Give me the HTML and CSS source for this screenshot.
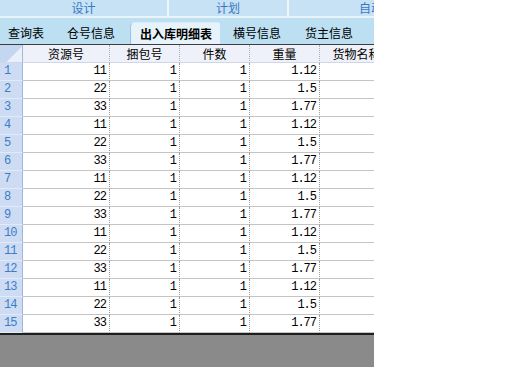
FILE: index.html
```html
<!DOCTYPE html>
<html>
<head>
<meta charset="utf-8">
<link rel="stylesheet" href="styles.css">
</head>
<body>
<div class="app">
  <div class="topbar">
    <div class="sec s1">设计</div>
    <div class="sec s2">计划</div>
    <div class="sec s3">自动化</div>
  </div>
  <div class="tabs">
    <div class="tab t1">查询表</div>
    <div class="tab t2">仓号信息</div>
    <div class="tab active">出入库明细表</div>
    <div class="tab t4">横号信息</div>
    <div class="tab t5">货主信息</div>
  </div>
  <div class="grid">
    <div class="hc corner"></div>
    <div class="hc">资源号</div>
    <div class="hc">捆包号</div>
    <div class="hc">件数</div>
    <div class="hc">重量</div>
    <div class="hc">货物名称</div>

    <div class="rn">1</div><div class="c">11</div><div class="c">1</div><div class="c">1</div><div class="c">1.12</div><div class="c"></div>
    <div class="rn">2</div><div class="c">22</div><div class="c">1</div><div class="c">1</div><div class="c">1.5</div><div class="c"></div>
    <div class="rn">3</div><div class="c">33</div><div class="c">1</div><div class="c">1</div><div class="c">1.77</div><div class="c"></div>
    <div class="rn">4</div><div class="c">11</div><div class="c">1</div><div class="c">1</div><div class="c">1.12</div><div class="c"></div>
    <div class="rn">5</div><div class="c">22</div><div class="c">1</div><div class="c">1</div><div class="c">1.5</div><div class="c"></div>
    <div class="rn">6</div><div class="c">33</div><div class="c">1</div><div class="c">1</div><div class="c">1.77</div><div class="c"></div>
    <div class="rn">7</div><div class="c">11</div><div class="c">1</div><div class="c">1</div><div class="c">1.12</div><div class="c"></div>
    <div class="rn">8</div><div class="c">22</div><div class="c">1</div><div class="c">1</div><div class="c">1.5</div><div class="c"></div>
    <div class="rn">9</div><div class="c">33</div><div class="c">1</div><div class="c">1</div><div class="c">1.77</div><div class="c"></div>
    <div class="rn">10</div><div class="c">11</div><div class="c">1</div><div class="c">1</div><div class="c">1.12</div><div class="c"></div>
    <div class="rn">11</div><div class="c">22</div><div class="c">1</div><div class="c">1</div><div class="c">1.5</div><div class="c"></div>
    <div class="rn">12</div><div class="c">33</div><div class="c">1</div><div class="c">1</div><div class="c">1.77</div><div class="c"></div>
    <div class="rn">13</div><div class="c">11</div><div class="c">1</div><div class="c">1</div><div class="c">1.12</div><div class="c"></div>
    <div class="rn">14</div><div class="c">22</div><div class="c">1</div><div class="c">1</div><div class="c">1.5</div><div class="c"></div>
    <div class="rn">15</div><div class="c">33</div><div class="c">1</div><div class="c">1</div><div class="c">1.77</div><div class="c"></div>
  </div>
  <div class="bottom"></div>
</div>
</body>
</html>
```
FILE: styles.css
```css
html, body {
  margin: 0;
  padding: 0;
  background: #ffffff;
}
.app {
  width: 374px;
  overflow: hidden;
  font-family: "Noto Sans CJK SC", "Liberation Sans", sans-serif;
  font-size: 12px;
}
.topbar {
  display: flex;
  height: 16px;
  background: #c6e2f4;
  border-bottom: 2px solid #e8f4fc;
}
.sec {
  flex: none;
  height: 16px;
  line-height: 16px;
  text-align: center;
  color: #3a76c4;
  white-space: nowrap;
  box-sizing: border-box;
}
.s1 { width: 169px; border-right: 2px solid #eef6fc; }
.s2 { width: 120px; border-right: 2px solid #eef6fc; }
.s3 { width: 170px; text-align: left; padding-left: 70px; }
.tabs {
  display: flex;
  align-items: flex-end;
  height: 26px;
  background: #bcdff2;
  border-bottom: 1px solid #3c3c3c;
}
.tab {
  flex: none;
  height: 22px;
  line-height: 21px;
  color: #000;
  white-space: nowrap;
  box-sizing: border-box;
}
.t1 { margin-left: 8px; }
.t2 { margin-left: 23px; }
.active {
  margin-left: 15px;
  padding: 0 9px;
  width: 90px;
  font-weight: bold;
  background: #e6f3fb;
  border-top-left-radius: 5px;
  border-top-right-radius: 2px;
  border-left: 1px solid #9cc4e0;
  border-top: 1px solid #d8ecf8;
}
.t4 { margin-left: 13px; }
.t5 { margin-left: 24px; }
.grid {
  display: grid;
  grid-template-columns: 23px 87px 70px 70px 70px 74px;
  grid-auto-rows: 18px;
  width: 394px;
}
.hc {
  background: #eef1f9;
  border-right: 1px dotted #a8b0c8;
  border-bottom: 1px solid #d0d6e6;
  box-sizing: border-box;
  text-align: center;
  line-height: 17px;
  color: #000;
  white-space: nowrap;
}
.corner {
  background: linear-gradient(135deg, #c4d6f0 60%, #eaf0fa 60%);
  border-right: 1px solid #a8b8d8;
}
.rn {
  background: #cddcf2;
  border-right: 1px solid #9fb6de;
  border-bottom: 1px solid #e2eaf8;
  box-sizing: border-box;
  color: #3c7cc8;
  font-family: "Liberation Mono", monospace;
  font-size: 12px;
  letter-spacing: -1px;
  padding-left: 4px;
  line-height: 17px;
}
.c {
  border-right: 1px dotted #9a9a9a;
  border-bottom: 1px solid #c4c4c4;
  box-sizing: border-box;
  text-align: right;
  padding-right: 3px;
  font-family: "Liberation Mono", monospace;
  font-size: 12px;
  letter-spacing: -1px;
  line-height: 17px;
  color: #000;
}
.bottom {
  height: 32px;
  border-top: 2px solid #1e1e1e;
  background: #8a8a8a;
}
```
